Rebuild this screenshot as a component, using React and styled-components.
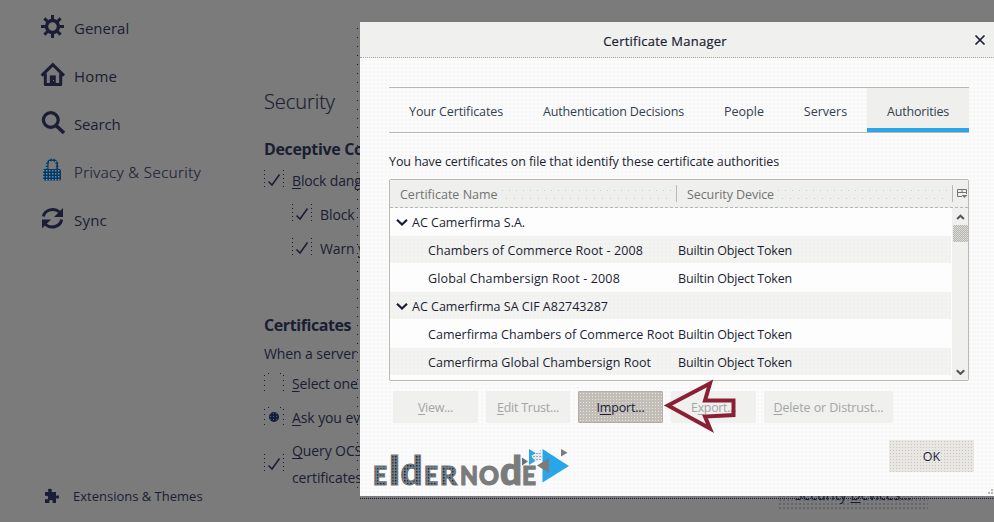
import React from 'react';
import styled, { createGlobalStyle } from 'styled-components';

const Global = createGlobalStyle`
  * { box-sizing: border-box; }
  html, body { margin: 0; overflow: hidden; background: #7b7b7b; }
  body { font-family: "Open Sans", "Noto Sans", sans-serif; color: #1a1d33; }
  u { text-underline-offset: 2px; text-decoration-thickness: 1px; }
  svg { display: block; flex: none; }
`;

const Page = styled.div`
  position: relative;
  display: flex;
  width: 994px;
  height: 522px;
  overflow: hidden;
  background: #7b7b7b;
`;

const Text = styled.span`
  letter-spacing: ${p => p.$ls || 0}px;
  white-space: nowrap;
`;

/* Sidebar */
const Sidebar = styled.nav`
  display: flex;
  flex-direction: column;
  width: 264px;
  padding: 4px 0 14px 40px;
`;
const NavItem = styled.div`
  display: flex;
  align-items: center;
  gap: 9px;
  height: 48px;
  font-size: 15px;
  color: #1a1d33;
  font-weight: ${p => (p.$active ? 300 : 400)};
  -webkit-text-stroke: ${p => (p.$active ? 0.2 : 0)}px #1a1d33;
  svg { margin-bottom: 4px; }
`;
const NavFooter = styled.div`
  display: flex;
  align-items: center;
  gap: 13px;
  height: 24px;
  margin-top: auto;
  padding-left: 4px;
  font-size: 13px;
`;

/* Preferences behind the dialog */
const Content = styled.main`
  width: 97px;
  padding-top: 86px;
`;
const PageTitle = styled.h1`
  margin: 0;
  height: 32px;
  font-size: 20px;
  line-height: 32px;
  font-weight: 300;
  -webkit-text-stroke: 0.2px #1a1d33;
`;
const Heading = styled.h2`
  margin: ${p => p.$top}px 0 0;
  height: 24px;
  font-size: 16px;
  line-height: 24px;
  font-weight: 700;
  white-space: nowrap;
`;
const Paragraph = styled.p`
  margin: 5px 0 0;
  font-size: 14px;
  line-height: 24px;
  height: 24px;
  white-space: nowrap;
`;
const Option = styled.div`
  display: flex;
  align-items: center;
  gap: 8px;
  height: ${p => p.$h || 34}px;
  padding-left: ${p => (p.$nested ? 28 : 0)}px;
  padding-bottom: 2px;
  font-size: 14px;
  line-height: 27px;
`;
const CheckFrame = styled.span`
  display: flex;
  align-items: center;
  justify-content: center;
  flex: none;
  width: 20px;
  height: 20px;
  background:
    linear-gradient(#1a1d33 1px, transparent 0) 0 0 / 1px 4px repeat-y,
    linear-gradient(#1a1d33 1px, transparent 0) 19px 0 / 1px 4px repeat-y;
`;
const RadioFrame = styled(CheckFrame)`
  background:
    linear-gradient(#1a1d33 1px, transparent 0) 0 7px / 1px 5px repeat-y,
    linear-gradient(#1a1d33 1px, transparent 0) 19px 7px / 1px 5px repeat-y,
    linear-gradient(90deg, #1a1d33 1px, transparent 0) 4px 0 / 12px 1px repeat-x;
`;
const RadioDot = styled.span`
  width: 10px;
  height: 10px;
  border-radius: 50%;
  background: radial-gradient(circle, #246a98 0.7px, #1a1d33 1px) 0 0 / 3px 3px;
`;
const ContentEdge = styled.div`
  position: absolute;
  left: 357px;
  top: 28px;
  width: 1px;
  height: 464px;
  background: linear-gradient(#1a1d33 1px, transparent 0) 0 0 / 1px 9px repeat-y;
`;
const HiddenButton = styled.div`
  position: absolute;
  left: 778px;
  top: 482px;
  width: 150px;
  height: 27px;
  text-align: center;
  font-size: 14px;
  line-height: 26px;
  background: radial-gradient(circle, #33344a 0.5px, transparent 0.8px) 0 0 / 4px 4px;
`;

/* Dialog */
const Dialog = styled.section`
  position: absolute;
  left: 360px;
  top: 22px;
  width: 634px;
  height: 474px;
  background: radial-gradient(circle, #f4f4f2 0.6px, #fbfbfb 1px) 0 0 / 4px 4px;
  font-size: 12.5px;
`;
const DialogEdge = styled.div`
  position: absolute;
  left: 360px;
  top: 498px;
  width: 634px;
  height: 1px;
  background: linear-gradient(90deg, #1a1d33 1px, transparent 0) 0 0 / 2px 1px;
`;
const TitleBar = styled.header`
  display: grid;
  grid-template-columns: 610px 12px;
  column-gap: 4px;
  align-items: center;
  height: 36px;
  background: #f0f0ee;
  border-bottom: 1px dotted #aaa69f;
  text-align: center;
  font-size: 13px;
  font-weight: 500;
`;
const TitleText = styled.div`
  padding-top: 2px;
  -webkit-text-stroke: 0.2px #1a1d33;
`;
const DialogBody = styled.div`
  padding: 29px 20px 0 29px;
`;
const Tabs = styled.div`
  display: grid;
  grid-template-columns: 134px 181px 80px 83px 102px;
  width: 580px;
  height: 46px;
  border: 1px solid #bcb8b2;
  border-width: 1px 0;
`;
const Tab = styled.div`
  display: flex;
  align-items: center;
  justify-content: center;
  padding-top: ${p => (p.$active ? 6 : 2)}px;
  color: #33404f;
  background: ${p => (p.$active ? '#efefed' : 'transparent')};
  border-bottom: ${p => (p.$active ? '4px solid #29a6ea' : '0')};
`;
const Intro = styled.p`
  margin: 19px 0 7px;
  line-height: 20px;
  height: 20px;
`;
const Tree = styled.div`
  width: 580px;
  height: 202px;
  border: 1px solid #bcb8b2;
  border-radius: 2px;
  background: #fdfdfd;
  overflow: hidden;
`;
const TreeHeader = styled.div`
  display: grid;
  grid-template-columns: 287px 276px 15px;
  height: 28px;
  align-items: center;
  background: #efefed;
  border-bottom: 1px dashed #b5b7b4;
  color: #717473;
`;
const HeaderCell = styled.div`
  display: flex;
  align-items: center;
  gap: 4px;
  height: 17px;
  padding: 2px 5px 0 10px;
  border-right: 1px solid #bcb8b2;
`;
const Dots = styled.span`
  flex: 1;
  height: 9px;
  background:
    linear-gradient(#a3d9ee, #a3d9ee) 0 0 / 1px 1px no-repeat,
    linear-gradient(90deg, #a3d9ee 1px, transparent 0) 0 0 / 7px 1px repeat-x,
    linear-gradient(90deg, #a3d9ee 1px, transparent 0) 4px 8px / 8px 1px repeat-x;
`;
const PickerCell = styled.div`
  padding-left: 3px;
`;
const TreeMain = styled.div`
  display: flex;
  height: 172px;
`;
const Rows = styled.div`
  flex: 1;
`;
const Row = styled.div`
  display: grid;
  grid-template-columns: 288px 1fr;
  align-items: center;
  height: 28px;
  margin-right: 1px;
  padding-top: 1px;
  border-bottom: 1px solid #fdfdfd;
  background: ${p => (p.$striped ? 'radial-gradient(circle, #fbfbfb 0.4px, #f1f1ef 0.9px) 0 0 / 4px 4px' : '#fdfdfd')};
`;
const NameCell = styled.div`
  display: flex;
  align-items: center;
  gap: 4px;
  padding-left: ${p => (p.$group ? 6 : 38)}px;
`;
const Scrollbar = styled.div`
  display: flex;
  flex-direction: column;
  align-items: center;
  justify-content: space-between;
  width: 16px;
  padding-bottom: 5px;
  background: #f0f0ee;
`;
const ScrollTop = styled.div`
  display: flex;
  flex-direction: column;
  align-items: center;
  gap: 5px;
  padding-top: 6px;
`;
const Thumb = styled.div`
  width: 15px;
  height: 17px;
  background: conic-gradient(#b9b3ad 25%, #d8d8d5 0 50%, #b9b3ad 0 75%, #dce1e1 0) 0 0 / 2px 2px;
`;
const Actions = styled.div`
  display: flex;
  gap: 8px;
  margin: 10px 0 0 4px;
`;
const Button = styled.button`
  width: ${p => p.$w || 85}px;
  height: 32px;
  padding: 1px 0 0;
  border: 0;
  border-radius: 1px;
  font: inherit;
  color: ${p => (p.$enabled ? '#1a1d33' : '#a3a6a6')};
  background: #f0f0ee;
`;
const HoverButton = styled(Button)`
  border: 1px solid #b5aea8;
  padding-top: 0;
  background: radial-gradient(circle, #e4e6e4 0.5px, #c2bdb7 1px) 0 0 / 3px 3px;
`;
const OkButton = styled(Button)`
  padding: 0;
  background: radial-gradient(circle, #c8c3bc 0.5px, #e8e7e4 1px) 0 0 / 3px 3px;
`;
const Footer = styled.footer`
  display: flex;
  justify-content: flex-end;
  margin-top: 17px;
  margin-right: ${634 - 49 - 585}px;
`;
const Overlay = styled.div`
  position: absolute;
  left: ${p => p.$x}px;
  top: ${p => p.$y}px;
`;

const Gear = () => (
  <svg width="25" height="25" viewBox="0 0 25 25" fill="none" stroke="#1a1d33">
    <circle cx="12.500" cy="12.500" r="6" strokeWidth="3.400" />
    <path d="M12.500 1v5M12.500 19v5M1 12.500h5M19 12.500h5M4.400 4.400l3.400 3.400M17.200 17.200l3.400 3.400M20.600 4.400l-3.400 3.400M7.800 17.200l-3.400 3.400" strokeWidth="3" />
  </svg>
);
const House = () => (
  <svg width="25" height="25" viewBox="0 0 25 25" fill="none" stroke="#1a1d33">
    <path d="M1.600 13.600L12.800 2.600L24 13.600" strokeWidth="3" />
    <path d="M5.300 11.500V22.500H20.700V11.500" strokeWidth="3" strokeLinejoin="round" />
    <path d="M9.800 22V13.400h6V22z" fill="#1a1d33" stroke="none" />
    <path d="M13 18h1v1h-1z" fill="#7b7b7b" stroke="none" />
  </svg>
);
const Magnifier = () => (
  <svg width="25" height="25" viewBox="0 0 25 25" fill="none" stroke="#1a1d33">
    <circle cx="10.800" cy="10" r="7.400" strokeWidth="3.200" />
    <path d="M16 15.500l8 7.500" strokeWidth="3.600" />
  </svg>
);
const Padlock = () => (
  <svg width="25" height="25" viewBox="0 0 25 25">
    <defs>
      <pattern id="mesh" width="3" height="3" patternUnits="userSpaceOnUse">
        <path d="M0 0h3v3H0z" fill="#1c3350" />
        <path d="M0 0h1.400v1.400H0z" fill="#2ba0e0" />
      </pattern>
    </defs>
    <path d="M7.200 12V7.200a5 5.500 0 0 1 10 0V12" fill="none" stroke="url(#mesh)" strokeWidth="2.600" />
    <rect x="3" y="11" width="18" height="11.500" rx="1.500" fill="url(#mesh)" />
  </svg>
);
const SyncIcon = () => (
  <svg width="25" height="25" viewBox="0 0 25 25" fill="none" stroke="#1a1d33" strokeWidth="3">
    <path d="M3.400 10.500A9.500 8.500 0 0 1 19.500 6" />
    <path d="M21.600 13.500A9.500 8.500 0 0 1 5.500 18.500" />
    <path d="M23 2v9h-9z" fill="#1a1d33" stroke="none" />
    <path d="M2 22.500V13.500h9z" fill="#1a1d33" stroke="none" />
  </svg>
);
const Puzzle = () => (
  <svg width="16" height="16" viewBox="0 0 16 16" fill="#1a1d33">
    <path d="M1 4h3.600C3.200 1.500 4.400.8 6 .8s2.700.8 1.300 3.200H12v4c2-1.300 3-.8 3 1s-1 2.300-3 1v5H8.500c.6-2 .2-3-1.500-3s-2.100 1-1.500 3H1v-4c2.300.7 3.200.2 3.200-1.300S3.300 7.200 1 8z" />
  </svg>
);
const Tick = () => (
  <svg width="14" height="14" viewBox="0 0 14 14" fill="none" stroke="#1a1d33" strokeWidth="1.500">
    <path d="M1.500 8.500L5 12L12.500 1.500" />
  </svg>
);
const Chevron = ({ size = 12, up, color = '#1a1d33', weight = 2.2 }) => (
  <svg width={size} height={size * 0.7} viewBox="0 0 12 8" fill="none" stroke={color} strokeWidth={weight}>
    <path d={up ? 'M1.500 6.500L6 2l4.500 4.500' : 'M1 1.500L6 6.300L11 1.500'} />
  </svg>
);
const CloseIcon = () => (
  <svg width="12" height="12" viewBox="0 0 12 12" stroke="#1a1d33" strokeWidth="1.700">
    <path d="M1.500 1.500l9 9M10.500 1.500l-9 9" />
  </svg>
);
const ColumnPicker = () => (
  <svg width="12" height="11" viewBox="0 0 12 11" fill="none" stroke="#717473">
    <path d="M6 8.500H1.500V1.500h9V6M1.500 4.500h9M6 1.500v3" />
    <path d="M5.500 7h6L8.500 10z" fill="#717473" stroke="none" />
  </svg>
);
const Arrow = () => (
  <svg width="74" height="54" viewBox="0 0 74 54">
    <path d="M4 26.500L46 4.500L41 21.500H69.500V36L41 37.500L46 49.500Z" fill="none" stroke="#8b2035" strokeWidth="4" />
  </svg>
);
const Logo = () => (
  <svg width="200" height="42" viewBox="0 0 200 42" fontFamily="Lato, sans-serif" fontWeight="900">
    <defs>
      <pattern id="slate" width="3" height="3" patternUnits="userSpaceOnUse">
        <path d="M0 0h3v3H0z" fill="#747779" />
        <path d="M0 0h1.500v1.500H0z" fill="#1d2c45" />
        <path d="M2 2h1v1H2z" fill="#4d93b8" />
      </pattern>
      <pattern id="haze" width="3" height="3" patternUnits="userSpaceOnUse">
        <path d="M0 0h3v3H0z" fill="#e6ecee" />
        <path d="M0 0h2v1H0z" fill="#9ab2be" />
      </pattern>
    </defs>
    <g fill="url(#slate)" stroke="#747779" strokeWidth="1.200">
      <text x="2" y="37.500" fontSize="26" textLength="14" lengthAdjust="spacingAndGlyphs">E</text>
      <text x="18" y="37.500" fontSize="40" textLength="11" lengthAdjust="spacingAndGlyphs">l</text>
      <text x="29.500" y="37.500" fontSize="40" textLength="22" lengthAdjust="spacingAndGlyphs">d</text>
      <text x="53" y="37.500" fontSize="26" textLength="14" lengthAdjust="spacingAndGlyphs">E</text>
      <text x="69" y="37.500" fontSize="26" textLength="17" lengthAdjust="spacingAndGlyphs">R</text>
    </g>
    <g fill="#7a7c7c" stroke="#7a7c7c" strokeWidth="1.200">
      <text x="89" y="37.500" fontSize="26" textLength="18" lengthAdjust="spacingAndGlyphs">N</text>
      <text x="108" y="37.500" fontSize="26" textLength="20" lengthAdjust="spacingAndGlyphs">O</text>
      <text x="129" y="37.500" fontSize="40" textLength="22" lengthAdjust="spacingAndGlyphs">d</text>
      <text x="151" y="37.500" fontSize="26" textLength="14" lengthAdjust="spacingAndGlyphs">E</text>
    </g>
    <path d="M158 2l13 8-13 8z" fill="#29a6ea" />
    <path d="M160 9l10-6v10l-6 1z" fill="url(#haze)" />
    <path d="M151 10.500l6 4-6 4z" fill="#6e7070" />
    <path d="M171.500 2L198 19L171.500 35.500z" fill="#29a6ea" />
    <path d="M166 18.500L178 11V26z" fill="#7a7c7c" />
    <path d="M190 2l6.500 3.800L190 9.500z" fill="#7a7c7c" />
  </svg>
);
const Grip = () => (
  <svg width="5" height="5" viewBox="0 0 5 5" fill="#bcb8b2">
    <path d="M3 0h2v2H3zM0 3h2v2H0zM3 3h2v2H3z" />
  </svg>
);

const NAV = [
  { label: 'General', icon: Gear, ls: 0 },
  { label: 'Home', icon: House, ls: 0.15 },
  { label: 'Search', icon: Magnifier, ls: -0.15 },
  { label: 'Privacy & Security', icon: Padlock, ls: 0.45, active: true },
  { label: 'Sync', icon: SyncIcon, ls: 0.2 },
];
const TABS = [
  { label: 'Your Certificates', ls: -0.11 },
  { label: 'Authentication Decisions', ls: -0.14 },
  { label: 'People', ls: 0 },
  { label: 'Servers', ls: 0 },
  { label: 'Authorities', ls: -0.18, active: true },
];
const ROWS = [
  { name: 'AC Camerfirma S.A.', ls: 0, group: true },
  { name: 'Chambers of Commerce Root - 2008', ls: 0.12 },
  { name: 'Global Chambersign Root - 2008', ls: 0.14 },
  { name: 'AC Camerfirma SA CIF A82743287', ls: 0, group: true },
  { name: 'Camerfirma Chambers of Commerce Root', ls: 0.03 },
  { name: 'Camerfirma Global Chambersign Root', ls: 0.05 },
];

export default function App() {
  return (
    <Page>
      <Global />
      <Sidebar>
        {NAV.map(({ label, icon: Icon, ls, active }) => (
          <NavItem key={label} $active={active}>
            <Icon />
            <Text $ls={ls}>{label}</Text>
          </NavItem>
        ))}
        <NavFooter>
          <Puzzle />
          <Text>Extensions &amp; Themes</Text>
        </NavFooter>
      </Sidebar>

      <Content>
        <PageTitle><Text $ls={-0.05}>Security</Text></PageTitle>
        <Heading $top={19}><Text $ls={-0.35}>Deceptive Co</Text></Heading>
        <Option $h={40}><CheckFrame><Tick /></CheckFrame><Text $ls={-0.15}><u>B</u>lock dang</Text></Option>
        <Option $nested $h={28}><CheckFrame><Tick /></CheckFrame><Text $ls={-0.1}>Block</Text></Option>
        <Option $nested $h={40}><CheckFrame><Tick /></CheckFrame><Text $ls={-0.15}>Warn <u>y</u></Text></Option>
        <Heading $top={44}><Text $ls={-0.42}>Certificates</Text></Heading>
        <Paragraph><Text $ls={-0.1}>When a server</Text></Paragraph>
        <Option $h={36}><RadioFrame /><Text $ls={-0.15}><u>S</u>elect one</Text></Option>
        <Option $h={32}><RadioFrame><RadioDot /></RadioFrame><Text $ls={-0.1}><u>A</u>sk you ev</Text></Option>
        <Option $h={62}>
          <CheckFrame><Tick /></CheckFrame>
          <Text $ls={-0.1}><u>Q</u>uery OCS<br />certificates</Text>
        </Option>
      </Content>

      <ContentEdge />
      <HiddenButton>Security <u>D</u>evices...</HiddenButton>
      <DialogEdge />

      <Dialog>
        <TitleBar>
          <TitleText><Text $ls={0.25}>Certificate Manager</Text></TitleText>
          <CloseIcon />
        </TitleBar>
        <DialogBody>
          <Tabs>
            {TABS.map(t => (
              <Tab key={t.label} $active={t.active}><Text $ls={t.ls}>{t.label}</Text></Tab>
            ))}
          </Tabs>
          <Intro><Text $ls={-0.07}>You have certificates on file that identify these certificate authorities</Text></Intro>
          <Tree>
            <TreeHeader>
              <HeaderCell><Text>Certificate Name</Text><Dots /></HeaderCell>
              <HeaderCell><Text $ls={-0.08}>Security Device</Text><Dots /></HeaderCell>
              <PickerCell><ColumnPicker /></PickerCell>
            </TreeHeader>
            <TreeMain>
              <Rows>
                {ROWS.map((r, i) => (
                  <Row key={r.name} $striped={i % 2 === 1}>
                    <NameCell $group={r.group}>
                      {r.group && <Chevron />}
                      <Text $ls={r.ls}>{r.name}</Text>
                    </NameCell>
                    {!r.group && <Text $ls={-0.17}>Builtin Object Token</Text>}
                  </Row>
                ))}
              </Rows>
              <Scrollbar>
                <ScrollTop>
                  <Chevron size={9} up color="#55585c" weight={2.8} />
                  <Thumb />
                </ScrollTop>
                <Chevron size={9} color="#55585c" weight={2.8} />
              </Scrollbar>
            </TreeMain>
          </Tree>
          <Actions>
            <Button><Text $ls={-0.3}><u>V</u>iew...</Text></Button>
            <Button $w={84}><Text $ls={-0.26}><u>E</u>dit Trust...</Text></Button>
            <HoverButton $enabled><Text $ls={-0.18}>I<u>m</u>port...</Text></HoverButton>
            <Button><Text $ls={-0.35}>E<u>x</u>port...</Text></Button>
            <Button $w={129}><Text $ls={-0.12}><u>D</u>elete or Distrust...</Text></Button>
          </Actions>
          <Footer><OkButton $enabled>OK</OkButton></Footer>
        </DialogBody>
        <Overlay $x={304} $y={357}><Arrow /></Overlay>
        <Overlay $x={11} $y={425}><Logo /></Overlay>
        <Overlay $x={628} $y={467}><Grip /></Overlay>
      </Dialog>
    </Page>
  );
}
